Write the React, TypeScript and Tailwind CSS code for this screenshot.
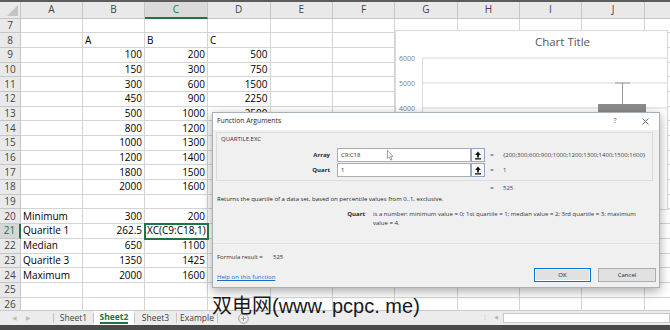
import React from "react";

const cols = ["A", "B", "C", "D", "E", "F", "G", "H", "I", "J", "K"];

const data: Record<number, string[]> = {
  8: ["", "A", "B", "C"],
  9: ["", "100", "200", "500"],
  10: ["", "150", "300", "750"],
  11: ["", "300", "600", "1500"],
  12: ["", "450", "900", "2250"],
  13: ["", "500", "1000", "2500"],
  14: ["", "800", "1200", ""],
  15: ["", "1000", "1300", ""],
  16: ["", "1200", "1400", ""],
  17: ["", "1800", "1500", ""],
  18: ["", "2000", "1600", ""],
  20: ["Minimum", "300", "200", ""],
  21: ["Quaritle 1", "262.5", "XC(C9:C18,1)", ""],
  22: ["Median", "650", "1100", ""],
  23: ["Quaritle 3", "1350", "1425", ""],
  24: ["Maximum", "2000", "1600", ""],
};

function isNum(s: string) {
  return s !== "" && !isNaN(Number(s));
}

function RefIcon() {
  return (
    <svg width="8" height="9" viewBox="0 0 8 9">
      <path d="M4 0.5 L1.2 4 H3.1 V6.4 H4.9 V4 H6.8 Z" fill="#111" />
      <rect x="1" y="7.2" width="6" height="1.3" fill="#111" />
    </svg>
  );
}

export default function App() {
  const rows = Array.from({ length: 20 }, (_, i) => i + 7);
  return (
    <div className="w-[670px] h-[330px] relative overflow-hidden bg-white flex flex-col font-['Open_Sans',sans-serif]">
      <div className="h-[2px] shrink-0 bg-[#5c5c5c]" />
      {/* sheet grid */}
      <div className="h-[308px] shrink-0 overflow-hidden">
        <div className="grid grid-cols-[21px_62px_62px_63px_62.5px_62.5px_62px_63px_62px_62px_63px_62px] grid-rows-[16.5px_repeat(20,14.7px)] w-[707px]">
          <div className="bg-[#e9e9e9] border-r border-b border-[#c6c6c6] flex items-end justify-end pr-[2px] pb-[2px]">
            <svg width="11" height="11" viewBox="0 0 11 11">
              <path d="M11 0 L11 11 L0 11 Z" fill="#c4c4c4" />
            </svg>
          </div>
          {cols.map((c) =>
            c === "C" ? (
              <div
                key={c}
                className="bg-[#dadada] text-[#217346] border-r border-r-[#c6c6c6] border-b-2 border-b-[#217346] flex items-center justify-center text-[10px]"
              >
                {c}
              </div>
            ) : (
              <div
                key={c}
                className="bg-[#e9e9e9] text-[#444] border-r border-b border-[#c6c6c6] flex items-center justify-center text-[10px]"
              >
                {c === "K" ? "" : c}
              </div>
            )
          )}
          {rows.map((r) => {
            const vals = data[r] || [];
            return (
              <React.Fragment key={r}>
                {r === 21 ? (
                  <div className="bg-[#d6d6d6] text-[#217346] border-r-2 border-r-[#217346] border-b border-b-[#c6c6c6] flex items-center justify-center text-[10px]">
                    {r}
                  </div>
                ) : (
                  <div className="bg-[#e9e9e9] text-[#444] border-r border-b border-[#c6c6c6] flex items-center justify-center text-[10px]">
                    {r}
                  </div>
                )}
                {cols.map((c, ci) => {
                  const v = vals[ci] ?? "";
                  const sel = r === 21 && ci === 2;
                  if (sel) {
                    return (
                      <div
                        key={c}
                        className="relative z-[1] border-r border-b border-[#d4d4d4] outline-2 outline-[#217346] -outline-offset-1 flex items-center pl-[2px] text-[10px] text-black whitespace-nowrap"
                      >
                        {v}
                      </div>
                    );
                  }
                  return isNum(v) ? (
                    <div
                      key={c}
                      className="border-r border-b border-[#d4d4d4] flex items-center justify-end pr-[2px] text-[10px] text-black whitespace-nowrap"
                    >
                      {v}
                    </div>
                  ) : (
                    <div
                      key={c}
                      className="border-r border-b border-[#d4d4d4] flex items-center pl-[2px] text-[10px] text-black whitespace-nowrap"
                    >
                      {v}
                    </div>
                  );
                })}
              </React.Fragment>
            );
          })}
        </div>
      </div>
      {/* sheet tabs */}
      <div className="h-[15px] shrink-0 bg-[#ececec] border-t border-[#c8c8c8] flex items-stretch text-[8.5px] text-[#444]">
        <div className="w-[53px] flex items-center gap-[9px] pl-[12px] text-[#bdbdbd] text-[6px]">
          <span>◀</span>
          <span>▶</span>
        </div>
        <div className="w-px h-[10px] self-center bg-[#c4c4c4]" />
        <div className="w-[39px] flex items-center justify-center">Sheet1</div>
        <div className="w-px h-[10px] self-center bg-[#c4c4c4]" />
        <div className="w-[40px] bg-white flex flex-col items-center justify-center">
          <span className="font-bold text-[#217346] leading-[10px]">Sheet2</span>
          <span className="w-[28px] h-[2px] bg-[#217346]" />
        </div>
        <div className="w-px h-[10px] self-center bg-[#c4c4c4]" />
        <div className="w-[41px] flex items-center justify-center">Sheet3</div>
        <div className="w-px h-[10px] self-center bg-[#c4c4c4]" />
        <div className="w-[40px] flex items-center justify-center">Example</div>
        <div className="w-px h-[10px] self-center bg-[#c4c4c4]" />
        <div className="ml-[20px] flex items-center">
          <svg width="11" height="11" viewBox="0 0 11 11">
            <circle cx="5.5" cy="5.5" r="4.8" fill="none" stroke="#9a9a9a" strokeWidth="0.9" />
            <path d="M5.5 3 V8 M3 5.5 H8" stroke="#9a9a9a" strokeWidth="0.9" />
          </svg>
        </div>
        <div className="flex-1" />
        <div className="w-[190px] flex items-center text-[#b0b0b0] text-[7px]">
          <span className="w-[10px] text-center">⁝</span>
          <span className="w-[12px] text-center text-[5px]">◀</span>
          <div className="ml-[1px] flex-1 h-[10px] bg-white border border-[#c8c8c8]" />
        </div>
      </div>
      <div className="h-[5px] shrink-0 bg-[#4a4a4a]" />

      {/* chart */}
      <div className="absolute left-[395px] top-[30px] w-[273px] h-[180px] bg-white border border-[#d9d9d9]">
        <div className="h-[22px] pl-[62px] text-center leading-[22px] text-[11.5px] text-[#595959]">Chart Title</div>
        <svg width="271" height="178" viewBox="0 0 271 178" className="absolute left-0 top-0">
          <line x1="26" y1="27" x2="271" y2="27" stroke="#d9d9d9" strokeWidth="1" />
          <line x1="26" y1="52" x2="271" y2="52" stroke="#d9d9d9" strokeWidth="1" />
          <line x1="26" y1="77" x2="271" y2="77" stroke="#d9d9d9" strokeWidth="1" />
          <line x1="26.5" y1="27" x2="26.5" y2="178" stroke="#d9d9d9" strokeWidth="1" />
          <text x="19" y="29.5" textAnchor="end" fontSize="7" fill="#7f7f7f" fontFamily="Open Sans">6000</text>
          <text x="19" y="54.5" textAnchor="end" fontSize="7" fill="#7f7f7f" fontFamily="Open Sans">5000</text>
          <text x="19" y="79.5" textAnchor="end" fontSize="7" fill="#7f7f7f" fontFamily="Open Sans">4000</text>
          <line x1="219" y1="52" x2="234" y2="52" stroke="#9a9a9a" strokeWidth="1" />
          <line x1="226.5" y1="52" x2="226.5" y2="73" stroke="#9a9a9a" strokeWidth="1" />
          <rect x="202" y="73" width="48" height="40" fill="#8c8c8c" />
        </svg>
      </div>

      {/* dialog */}
      <div className="absolute left-[212px] top-[112px] w-[448px] h-[176px] bg-[#f0f0f0] border border-[#a9b0b8] shadow-[0_3px_10px_rgba(0,0,0,0.35)] flex flex-col text-[#1e1e1e] text-[6px]">
        <div className="h-[17px] shrink-0 bg-white flex items-center">
          <span className="flex-1 pl-[4px] text-[6.8px]">Function Arguments</span>
          <span className="w-[10px] text-center text-[7px] text-[#555]">?</span>
          <span className="ml-[19px] w-[12px] flex items-center justify-center">
            <svg width="7" height="7" viewBox="0 0 7 7">
              <path d="M0.5 0.5 L6.5 6.5 M6.5 0.5 L0.5 6.5" stroke="#444" strokeWidth="0.8" />
            </svg>
          </span>
          <span className="w-[8px]" />
        </div>
        <div className="mt-[2px] ml-[3px] mr-[6px] h-[49px] shrink-0 border border-[#dcdcdc] flex flex-col">
          <div className="h-[13px] pl-[4px] pt-[1.5px] leading-[9px] text-[6px] text-[#333]">QUARTILE.EXC</div>
          <div className="mt-[2px] h-[14px] flex items-center">
            <span className="w-[113px] text-right font-bold">Array</span>
            <div className="ml-[7px] w-[134px] h-[14px] bg-white border border-[#abadb3] flex items-center pl-[3px]">C9:C18</div>
            <div className="w-[14px] h-[14px] bg-[#f7fafd] border border-[#8fa6c4] flex items-center justify-center">
              <RefIcon />
            </div>
            <span className="w-[14px] text-center text-[#444]">=</span>
            <span className="ml-[4px] text-[#444] whitespace-nowrap">{"{200;300;600;900;1000;1200;1300;1400;1500;1600}"}</span>
          </div>
          <div className="mt-[1px] h-[14px] flex items-center">
            <span className="w-[113px] text-right font-bold">Quart</span>
            <div className="ml-[7px] w-[134px] h-[14px] bg-white border border-[#abadb3] flex items-center pl-[3px]">1</div>
            <div className="w-[14px] h-[14px] bg-[#f7fafd] border border-[#8fa6c4] flex items-center justify-center">
              <RefIcon />
            </div>
            <span className="w-[14px] text-center text-[#444]">=</span>
            <span className="ml-[4px] text-[#444]">1</span>
          </div>
        </div>
        <div className="mt-[2px] h-[10px] shrink-0 ml-[272px] flex items-center text-[#444]">
          <span className="w-[14px] text-center">=</span>
          <span className="ml-[4px]">525</span>
        </div>
        <div className="mt-[1px] h-[10px] shrink-0 pl-[4px] flex items-center whitespace-nowrap">
          Returns the quartile of a data set, based on percentile values from 0..1, exclusive.
        </div>
        <div className="mt-[6px] h-[18px] shrink-0 flex leading-[9px]">
          <span className="w-[152px] text-right font-bold">Quart</span>
          <span className="ml-[8px] whitespace-nowrap text-[#333]">
            is a number: minimum value = 0; 1st quartile = 1; median value = 2; 3rd quartile = 3; maximum
            <br />
            value = 4.
          </span>
        </div>
        <div className="mt-[15px] shrink-0 border-t border-[#e3e3e3]" />
        <div className="mt-[8px] h-[10px] shrink-0 pl-[4px] flex items-center text-[#333]">
          <span className="w-[56px]">Formula result =</span>
          <span>525</span>
        </div>
        <div className="mt-[6px] h-[14px] shrink-0 flex items-end">
          <span className="pl-[4px] leading-[10px] text-[#1a6fc4] underline">Help on this function</span>
          <div className="flex-1" />
          <div className="w-[57px] h-[14px] self-start bg-[#e1e1e1] border border-[#0078d7] shadow-[inset_0_0_0_1px_#ffffff] flex items-center justify-center text-[#222]">OK</div>
          <div className="ml-[7px] mr-[3px] w-[58px] h-[14px] self-start bg-[#e1e1e1] border border-[#adadad] flex items-center justify-center text-[#222]">Cancel</div>
        </div>
        {/* mouse pointer */}
        <svg width="7" height="11" viewBox="0 0 7 11" className="absolute left-[174px] top-[37px]">
          <path d="M0.5 0.5 L0.5 8.5 L2.4 6.8 L3.8 10 L5 9.5 L3.6 6.4 L6 6.4 Z" fill="#fff" stroke="#666" strokeWidth="0.6" />
        </svg>
      </div>

      {/* watermark */}
      <div className="absolute left-[212px] top-[295px] text-[20px] leading-[22px] text-[#1a1a1a] whitespace-nowrap font-['Liberation_Sans','Noto_Sans_CJK_SC',sans-serif]">
        双电网(www. pcpc. me)
      </div>
    </div>
  );
}
